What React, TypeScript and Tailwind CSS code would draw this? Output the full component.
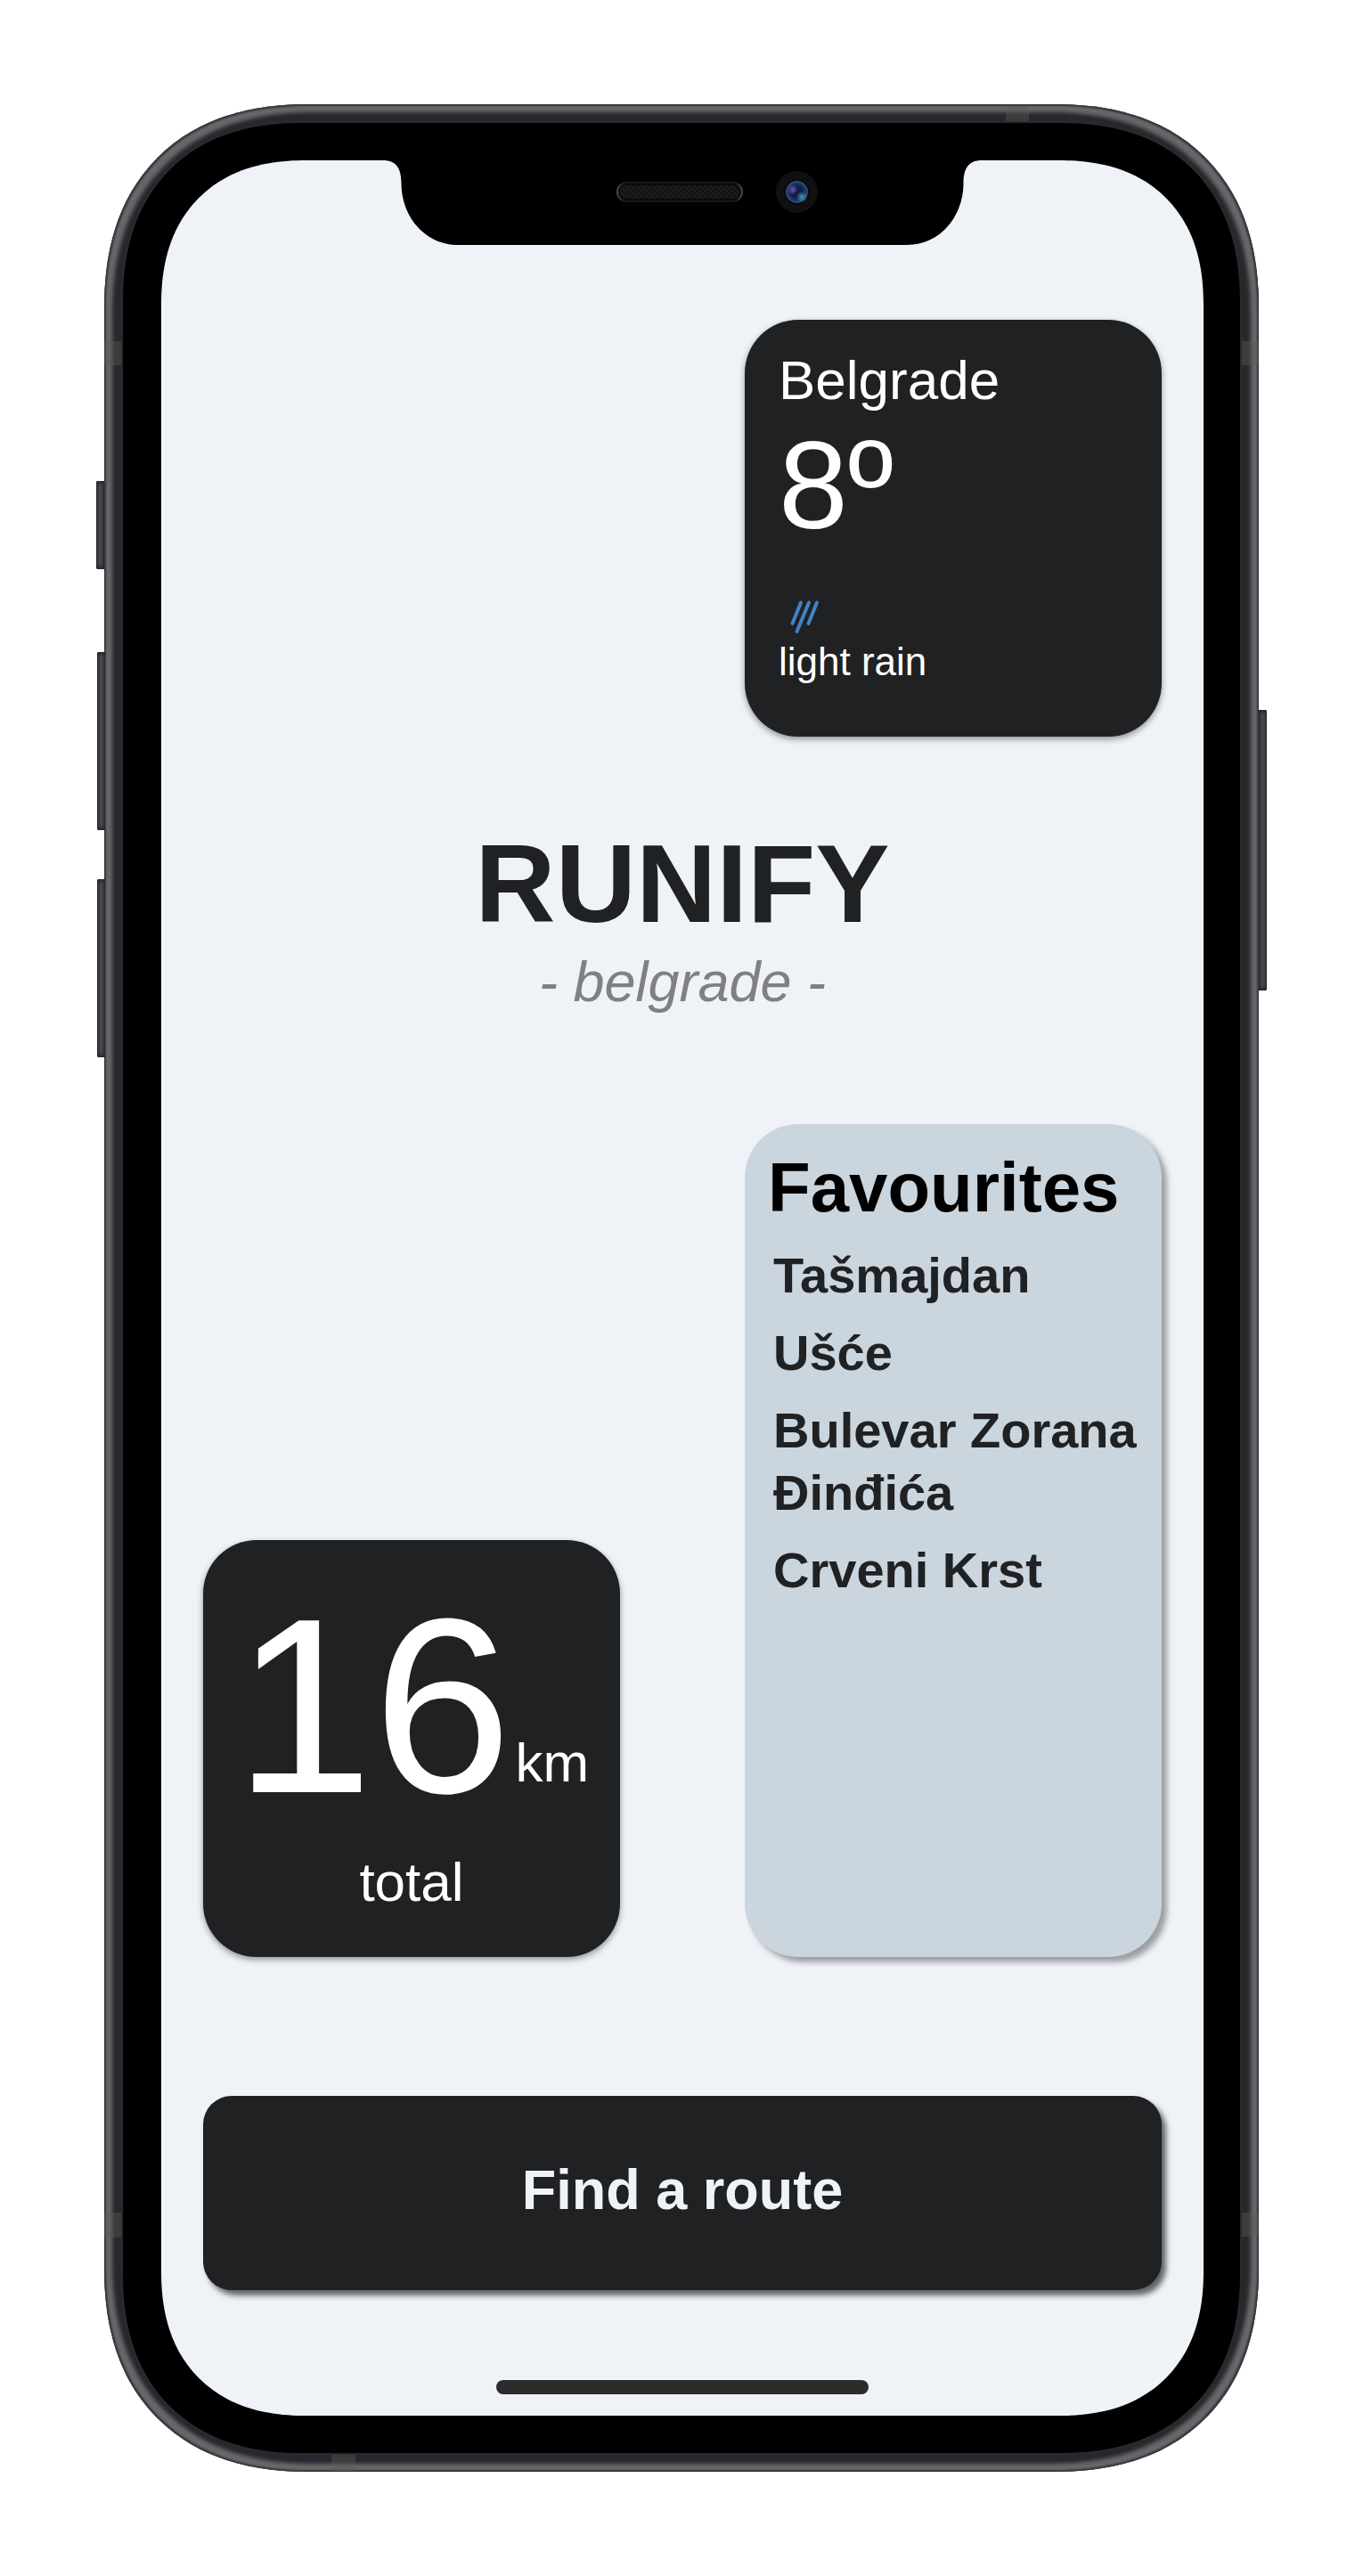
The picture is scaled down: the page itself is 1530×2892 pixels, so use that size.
const favourites = ['Tašmajdan', 'Ušće', 'Bulevar Zorana Đinđića', 'Crveni Krst'];

function SideButton({ className }: { className: string }) {
  return (
    <span
      aria-hidden="true"
      className={`absolute w-[9px] bg-[#55555a] shadow-[inset_0_0_4px_2px_#1f1f24] ${className}`}
    />
  );
}

function AntennaBand({ className }: { className: string }) {
  return <span aria-hidden="true" className={`absolute bg-[#5a5a5a]/40 ${className}`} />;
}

function Notch() {
  return (
    <svg
      aria-hidden="true"
      className="absolute -top-px left-1/2 h-24 w-[672px] -translate-x-1/2"
      viewBox="0 -1 672 96"
    >
      <defs>
        <pattern id="mesh" width="6" height="6" patternUnits="userSpaceOnUse">
          <rect width="6" height="6" fill="#1c1c1c" />
          <rect width="3" height="3" fill="#131313" />
          <rect x="3" y="3" width="3" height="3" fill="#131313" />
        </pattern>
        <linearGradient id="rim" x1="0" x2="1" y1="0" y2="0">
          <stop offset="0" stopColor="#4a4a4a" />
          <stop offset="0.05" stopColor="#171717" />
          <stop offset="0.95" stopColor="#171717" />
          <stop offset="1" stopColor="#4a4a4a" />
        </linearGradient>
        <radialGradient id="lens">
          <stop offset="0" stopColor="#0b1330" />
          <stop offset="0.6" stopColor="#12244a" />
          <stop offset="1" stopColor="#2a5482" />
        </radialGradient>
        <radialGradient id="violet">
          <stop offset="0" stopColor="#7450b4" />
          <stop offset="1" stopColor="#7450b4" stopOpacity="0" />
        </radialGradient>
        <radialGradient id="cyan">
          <stop offset="0" stopColor="#4596bd" />
          <stop offset="1" stopColor="#4596bd" stopOpacity="0" />
        </radialGradient>
      </defs>
      <path
        d="M0 -1V0C14 0 20.5 8 20.5 26C20.5 62 46 95 84 95H588C626 95 651.5 62 651.5 26C651.5 8 658 0 672 0V-1Z"
        fill="#000"
      />
      <rect x="263" y="25" width="140" height="21" rx="10.5" fill="#0b0b0b" stroke="url(#rim)" strokeWidth="2" />
      <rect x="266" y="28" width="134" height="15" rx="7.5" fill="url(#mesh)" />
      <circle cx="464.5" cy="35.5" r="23.5" fill="#101010" />
      <circle cx="464.5" cy="35.5" r="14" fill="#060606" />
      <circle cx="464.5" cy="35.5" r="12.5" fill="url(#lens)" />
      <circle cx="460" cy="33" r="6" fill="url(#violet)" />
      <circle cx="470" cy="41" r="6.5" fill="url(#cyan)" />
    </svg>
  );
}

function RainIcon() {
  return (
    <svg
      aria-hidden="true"
      className="mt-12 size-[54px]"
      viewBox="0 0 54 54"
      fill="none"
      stroke="#4282c4"
      strokeWidth="4"
      strokeLinecap="round"
    >
      <path d="M25 13.5L15.5 37M34 13.5L20.5 46M43 13.5L33.5 37" />
    </svg>
  );
}

function WeatherCard() {
  return (
    <section className="col-start-2 flex aspect-square flex-col rounded-[60px] bg-[#202123] px-[38px] pt-8 text-white shadow-[0_3px_7px_rgba(0,0,0,0.4)]">
      <h2 className="text-[62px] leading-[72px]">Belgrade</h2>
      <p className="mt-3 text-[140px] leading-[140px]">8º</p>
      <RainIcon />
      <p className="text-[44px] leading-[52px]">light rain</p>
    </section>
  );
}

function DistanceCard() {
  return (
    <section className="flex aspect-square flex-col items-center self-end rounded-[60px] bg-[#202123] pt-[46px] text-white shadow-[0_3px_7px_rgba(0,0,0,0.4)]">
      <p className="flex items-end gap-1">
        <span className="text-[280px] leading-[280px]">16</span>
        <span className="mb-10 text-[62px] leading-[72px]">km</span>
      </p>
      <p className="mt-[22px] text-[62px] leading-[72px]">total</p>
    </section>
  );
}

function FavouritesCard() {
  return (
    <section className="min-h-[935px] rounded-[60px] bg-[#cbd5de] pt-[26px] pr-4 pl-[26px] font-bold shadow-[6px_6px_6px_rgba(0,0,0,0.35)]">
      <h2 className="text-[78px] leading-[90px] text-black">Favourites</h2>
      <ul className="mt-[19px] flex flex-col gap-[17px] pl-1.5 text-[56px] leading-[70px] text-[#202123]">
        {favourites.map((name) => (
          <li key={name}>{name}</li>
        ))}
      </ul>
    </section>
  );
}

export default function App() {
  return (
    <main className="bg-white p-[117px] font-['Liberation_Sans',Arial,sans-serif]">
      <div className="relative rounded-[230px] bg-[#28272d] p-[19px] shadow-[inset_0_0_2px_2px_#37373a,inset_0_0_4px_9px_#68686c] [corner-shape:superellipse(1.2)]">
        <SideButton className="top-[423px] -left-[9px] h-[99px] rounded-l-xs" />
        <SideButton className="top-[615px] -left-[8px] h-[200px] rounded-l-xs" />
        <SideButton className="top-[870px] -left-[8px] h-[200px] rounded-l-xs" />
        <SideButton className="top-[680px] -right-[9px] h-[315px] rounded-r-xs" />
        <AntennaBand className="top-[266px] left-0 h-[27px] w-[19px]" />
        <AntennaBand className="top-[266px] right-0 h-[27px] w-[19px]" />
        <AntennaBand className="bottom-[263px] left-0 h-[28px] w-[19px]" />
        <AntennaBand className="right-0 bottom-[264px] h-[27px] w-[19px]" />
        <AntennaBand className="top-[2px] right-[258px] h-[17px] w-[26px]" />
        <AntennaBand className="bottom-px left-[255px] h-[18px] w-[27px]" />

        <div className="rounded-[204px] border-2 border-[#2b2b2a] bg-black pt-[42px] pr-[41px] pb-[42px] pl-[43px] [corner-shape:superellipse(1.2)]">
          <div className="relative flex flex-col rounded-[162px] bg-[#eff3f8] px-[47px] pt-[179px] pb-6 [corner-shape:superellipse(1.2)]">
            <Notch />
            <div className="grid grid-cols-2 gap-[140px]">
              <WeatherCard />
            </div>

            <header className="mt-[102px] text-center">
              <h1 className="text-[125px] leading-[125px] font-bold text-[#202123]">RUNIFY</h1>
              <p className="mt-3 text-[63px] leading-[72px] text-[#808080] italic">- belgrade -</p>
            </header>

            <div className="mt-[124px] grid grid-cols-2 gap-[140px]">
              <DistanceCard />
              <FavouritesCard />
            </div>

            <button
              type="button"
              className="mt-[156px] h-[218px] rounded-[32px] bg-[#202123] pb-2 text-[63px] leading-[72px] font-bold text-[#eff3f8] shadow-[5px_6px_6px_rgba(0,0,0,0.6)]"
            >
              Find a route
            </button>

            <div className="mt-[101px] h-4 w-[418px] self-center rounded-full bg-[#2b2b2b]" />
          </div>
        </div>
      </div>
    </main>
  );
}
